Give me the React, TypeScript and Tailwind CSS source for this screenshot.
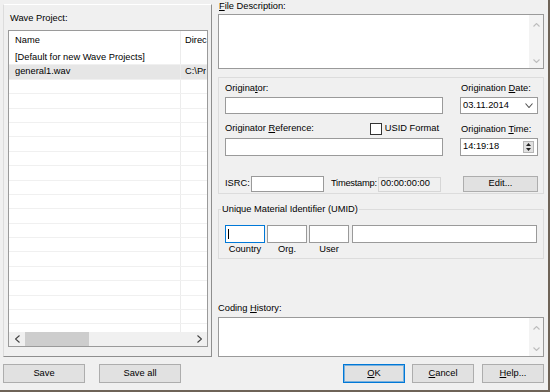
import React from "react";

function Chev({ dir, color = "#606060", size = 7 }: { dir: "up" | "down" | "left" | "right"; color?: string; size?: number }) {
  const horiz = dir === "up" || dir === "down";
  const w = horiz ? size : Math.round(size * 0.6);
  const h = horiz ? Math.round(size * 0.6) : size;
  let pts = "";
  if (dir === "up") pts = `0.5,${h - 0.5} ${w / 2},0.5 ${w - 0.5},${h - 0.5}`;
  if (dir === "down") pts = `0.5,0.5 ${w / 2},${h - 0.5} ${w - 0.5},0.5`;
  if (dir === "left") pts = `${w - 0.5},0.5 0.5,${h / 2} ${w - 0.5},${h - 0.5}`;
  if (dir === "right") pts = `0.5,0.5 ${w - 0.5},${h / 2} 0.5,${h - 0.5}`;
  return (
    <svg width={w} height={h} viewBox={`0 0 ${w} ${h}`} className="block">
      <polyline points={pts} fill="none" stroke={color} strokeWidth="1.1" />
    </svg>
  );
}

function ScrollStrip() {
  return (
    <div className="w-[14px] h-full bg-[#f3f3f3] flex flex-col items-center justify-between pt-[8px] pb-[5px]">
      <Chev dir="up" color="#bdbdbd" />
      <Chev dir="down" color="#bdbdbd" />
    </div>
  );
}

function Btn({ children, className = "" }: { children: React.ReactNode; className?: string }) {
  return (
    <div className={`h-[19px] bg-[#e1e1e1] border border-[#adadad] flex items-center justify-center ${className}`}>
      {children}
    </div>
  );
}

export default function App() {
  const rows = Array.from({ length: 20 });
  return (
    <div className="w-[550px] h-[392px] overflow-hidden bg-[#f0f0f0] border-r-2 border-b-2 border-[#6e6357] flex flex-col font-['Liberation_Sans',Arial,sans-serif] text-[9.3px] text-black leading-none">
      <div className="flex h-[357px] shrink-0">
        {/* Left column */}
        <div className="pl-[3px] pt-[4px] w-[212px] shrink-0">
          <div className="w-[209px] h-[353px] border border-t-white border-l-[#dcdcdc] border-r-[#8e8e8e] border-b-[#8e8e8e] flex flex-col">
            <div className="mt-[7px] h-[12px] leading-[12px] pl-[6px]">Wave Project:</div>
            <div className="mt-[6px] ml-[4px] w-[200px] h-[317px] border border-[#9a9a9a] bg-white flex flex-col overflow-hidden">
              <div className="h-[20px] flex shrink-0">
                <div className="w-[172px] shrink-0 border-r border-[#ececec] pl-[6px] flex items-center">Name</div>
                <div className="pl-[4px] flex items-center whitespace-nowrap overflow-hidden">Direc</div>
              </div>
              <div className="flex-1 overflow-hidden">
                {rows.map((_, i) => (
                  <div
                    key={i}
                    className={`h-[14.4px] border-b border-[#f0f0f0] flex ${i === 1 ? "bg-[#e6e6e6]" : ""}`}
                  >
                    <div className="w-[172px] shrink-0 border-r border-[#ececec] pl-[6px] flex items-center whitespace-nowrap overflow-hidden">
                      {i === 0 ? "[Default for new Wave Projects]" : i === 1 ? "general1.wav" : ""}
                    </div>
                    <div className="pl-[4px] flex items-center whitespace-nowrap overflow-hidden">
                      {i === 1 ? "C:\\Pr" : ""}
                    </div>
                  </div>
                ))}
              </div>
              <div className="h-[14px] bg-[#f0f0f0] flex items-center shrink-0">
                <div className="w-[16px] h-full flex items-center justify-center">
                  <Chev dir="left" color="#404040" size={8} />
                </div>
                <div className="w-[64px] h-full bg-[#cdcdcd]" />
                <div className="flex-1" />
                <div className="w-[15px] h-full flex items-center justify-center">
                  <Chev dir="right" color="#404040" size={8} />
                </div>
              </div>
            </div>
          </div>
        </div>

        {/* Right column */}
        <div className="pl-[6px] w-[332px] shrink-0 flex flex-col">
          <div className="h-[13px] leading-[13px] pl-[1px]">
            <span className="underline">F</span>ile Description:
          </div>
          <div className="mt-[1px] h-[55px] border border-[#9a9a9a] bg-white flex justify-end">
            <ScrollStrip />
          </div>

          <div className="mt-[8px] h-[117px] border border-[#dcdcdc] flex flex-col pl-[6px] pt-[4px]">
            <div className="flex">
              <div className="w-[218px] flex flex-col">
                <div className="h-[12px] leading-[12px]">
                  Origina<span className="underline">t</span>or:
                </div>
                <div className="mt-[3px] h-[17px] border border-[#9a9a9a] bg-white" />
              </div>
              <div className="ml-[17px] w-[78px] flex flex-col">
                <div className="h-[12px] leading-[12px] pl-[1px]">
                  Origination <span className="underline">D</span>ate:
                </div>
                <div className="mt-[3px] h-[17px] border border-[#9a9a9a] bg-white flex items-center pl-[2px]">
                  <span>03.11.2014</span>
                  <span className="ml-auto mr-[4px]">
                    <Chev dir="down" color="#555" size={8} />
                  </span>
                </div>
              </div>
            </div>

            <div className="flex mt-[9px]">
              <div className="w-[218px] flex flex-col">
                <div className="h-[12px] flex items-center">
                  <span>
                    Originator <span className="underline">R</span>eference:
                  </span>
                  <span className="ml-auto w-[12px] h-[12px] border border-[#333] bg-white" />
                  <span className="ml-[3px] mr-[4px]">USID Format</span>
                </div>
                <div className="mt-[3px] h-[18px] border border-[#9a9a9a] bg-white" />
              </div>
              <div className="ml-[17px] w-[78px] flex flex-col">
                <div className="h-[12px] leading-[12px] pl-[1px]">
                  Origination <span className="underline">T</span>ime:
                </div>
                <div className="mt-[3px] h-[18px] border border-[#9a9a9a] bg-white flex items-center pl-[2px]">
                  <span>14:19:18</span>
                  <span className="ml-auto mr-[3px] w-[11px] h-[12px] bg-[#e1e1e1] border border-[#b5b5b5] flex flex-col items-center justify-around">
                    <svg width="5" height="3" viewBox="0 0 5 3" className="block">
                      <polygon points="0,3 2.5,0 5,3" fill="#222" />
                    </svg>
                    <svg width="5" height="3" viewBox="0 0 5 3" className="block">
                      <polygon points="0,0 2.5,3 5,0" fill="#222" />
                    </svg>
                  </span>
                </div>
              </div>
            </div>

            <div className="flex items-center mt-[20px] h-[16px]">
              <span className="w-[26px]">ISRC:</span>
              <div className="w-[73px] h-[16px] border border-[#9a9a9a] bg-white" />
              <span className="ml-[7px] mr-[1px] whitespace-nowrap tracking-[-0.25px]">Timestamp:</span>
              <div className="w-[63px] h-[15px] border border-[#d6d6d6] flex items-center pl-[2px] whitespace-nowrap">00:00:00:00</div>
              <Btn className="ml-auto mr-[5px] w-[75px] !h-[16px]">Edit...</Btn>
            </div>
          </div>

          <fieldset className="mt-[9px] h-[56px] border border-[#dcdcdc] pl-[6px]">
            <legend className="ml-[-4px] px-[1px] leading-[12px] h-[12px]">Unique Material Identifier (UMID)</legend>
            <div className="mt-[10px] flex">
              <div className="w-[40px] flex flex-col">
                <div className="h-[18px] border border-[#0078d7] bg-white flex items-center pl-[2px]">
                  <div className="w-[1px] h-[10px] bg-black" />
                </div>
                <div className="h-[12px] leading-[12px] text-center">Country</div>
              </div>
              <div className="ml-[2px] w-[40px] flex flex-col">
                <div className="h-[18px] border border-[#9a9a9a] bg-white" />
                <div className="h-[12px] leading-[12px] text-center">Org.</div>
              </div>
              <div className="ml-[2px] w-[40px] flex flex-col">
                <div className="h-[18px] border border-[#9a9a9a] bg-white" />
                <div className="h-[12px] leading-[12px] text-center">User</div>
              </div>
              <div className="ml-[3px] w-[185px] flex flex-col">
                <div className="h-[18px] border border-[#9a9a9a] bg-white" />
              </div>
            </div>
          </fieldset>

          <div className="mt-[43px] h-[12px] leading-[12px]">
            Coding <span className="underline">H</span>istory:
          </div>
          <div className="mt-[3px] h-[40px] border border-[#9a9a9a] bg-white flex justify-end">
            <ScrollStrip />
          </div>
        </div>
      </div>

      <div className="mt-[7px] flex">
        <Btn className="ml-[3px] w-[82px]">Save</Btn>
        <Btn className="ml-[14px] w-[82px]">Save all</Btn>
        <div className="ml-auto mr-[4px] flex">
          <Btn className="w-[62px] !border-[#0078d7] shadow-[inset_0_0_0_1px_rgba(0,120,215,0.45)]">
            <span className="underline">O</span>K
          </Btn>
          <Btn className="ml-[7px] w-[62px]">
            <span className="underline">C</span>ancel
          </Btn>
          <Btn className="ml-[8px] w-[62px]">
            <span className="underline">H</span>elp...
          </Btn>
        </div>
      </div>
    </div>
  );
}
